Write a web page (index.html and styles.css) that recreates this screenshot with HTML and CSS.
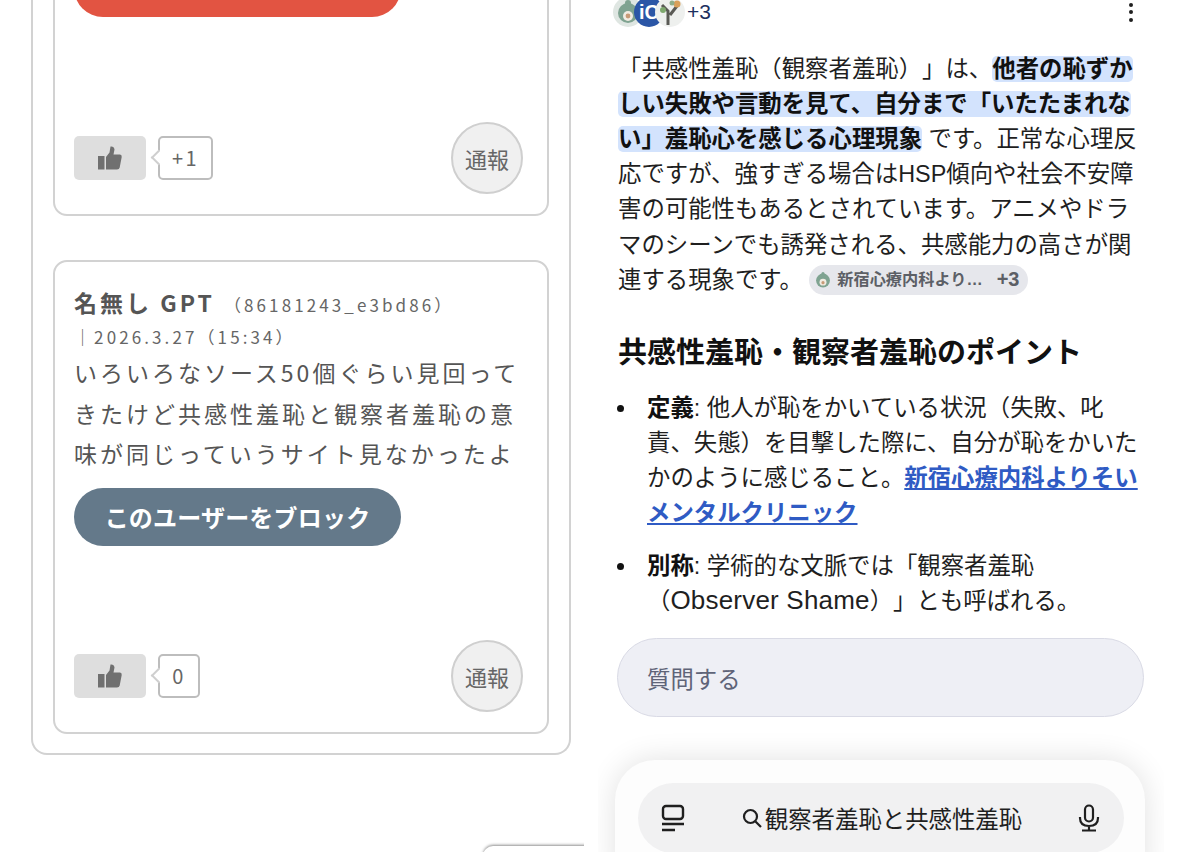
FILE: index.html
```html
<!DOCTYPE html>
<html lang="ja">
  <head>
    <title>共感性羞恥</title>
    <link rel="stylesheet" href="styles.css">
  </head>
  <body>

    <div class="page">

      <section class="thread-col">
        <div class="thread">

          <article class="comment comment-first">
            <div class="pill-btn pill-red"></div>
            <div class="comment-foot foot-first">
              <div class="like">
                <button class="like-btn">
                  <svg class="thumb" viewBox="0 0 24 24"><rect x="0" y="10" width="6.5" height="13.5"/><path d="M8 23.5V11L11.5 6.5L12.5 0.5Q16 0 16.5 3.5L15.5 8.5H22Q24 8.5 23.7 11L21.7 21.5Q21.3 23.5 19 23.5Z"/></svg>
                </button>
                <span class="like-count">+1</span>
              </div>
              <button class="report">通報</button>
            </div>
          </article>

          <article class="comment">
            <header class="comment-head">
              <strong class="comment-name">名無し GPT</strong>
              <span class="comment-id">（86181243_e3bd86）</span>
              <span class="comment-date">｜2026.3.27（15:34）</span>
            </header>
            <p class="comment-body">いろいろなソース50個ぐらい見回ってきたけど共感性羞恥と観察者羞恥の意味が同じっていうサイト見なかったよ</p>
            <button class="pill-btn pill-slate">このユーザーをブロック</button>
            <div class="comment-foot">
              <div class="like">
                <button class="like-btn">
                  <svg class="thumb" viewBox="0 0 24 24"><rect x="0" y="10" width="6.5" height="13.5"/><path d="M8 23.5V11L11.5 6.5L12.5 0.5Q16 0 16.5 3.5L15.5 8.5H22Q24 8.5 23.7 11L21.7 21.5Q21.3 23.5 19 23.5Z"/></svg>
                </button>
                <span class="like-count">0</span>
              </div>
              <button class="report">通報</button>
            </div>
          </article>

        </div>
        <div class="peek"></div>
      </section>

      <section class="answer-col">
        <div class="sources">
          <svg class="avatar" viewBox="0 0 30 30"><circle cx="15" cy="15" r="15" fill="#dfe6e2"/><circle cx="15" cy="16" r="10" fill="#7fa391"/><circle cx="15" cy="19" r="5" fill="#f1ece2"/><circle cx="15" cy="19" r="2.4" fill="#c79a76"/><circle cx="15" cy="6" r="3" fill="#7fa391"/></svg>
          <svg class="avatar" viewBox="0 0 30 30"><circle cx="15" cy="15" r="15" fill="#2b56a6"/><text x="15" y="22" text-anchor="middle" class="avatar-text">iC</text></svg>
          <svg class="avatar" viewBox="0 0 30 30"><circle cx="15" cy="15" r="15" fill="#eef0ee"/><path d="M13 28V14L7 8M15 18L22 9" stroke="#5a5a55" stroke-width="3" fill="none"/><circle cx="22" cy="7" r="3.5" fill="#d9a05b"/><circle cx="8" cy="13" r="3" fill="#7ea86e"/><circle cx="17" cy="6" r="2.5" fill="#8fae8a"/></svg>
          <span class="sources-more">+3</span>
          <span class="kebab"><i></i><i></i><i></i></span>
        </div>

        <p class="answer-text">「共感性羞恥（観察者羞恥）」は、<mark class="hl">他者の恥ずかしい失敗や言動を見て、自分まで「いたたまれない」羞恥心を感じる心理現象</mark> です。正常な心理反応ですが、強すぎる場合はHSP傾向や社会不安障害の可能性もあるとされています。アニメやドラマのシーンでも誘発される、共感能力の高さが関連する現象です。 <span class="chip"><svg class="chip-icon" viewBox="0 0 30 30"><circle cx="15" cy="16" r="13" fill="#7fa391"/><circle cx="15" cy="3" r="3" fill="#7fa391"/><circle cx="15" cy="19" r="6.5" fill="#f1ece2"/><circle cx="15" cy="20" r="3" fill="#c79a76"/></svg><span class="chip-name">新宿心療内科より…</span><span class="chip-more">+3</span></span></p>

        <h2 class="answer-title">共感性羞恥・観察者羞恥のポイント</h2>

        <ul class="answer-list">
          <li><b>定義</b>: 他人が恥をかいている状況（失敗、叱責、失態）を目撃した際に、自分が恥をかいたかのように感じること。<a class="src-link" href="#">新宿心療内科よりそいメンタルクリニック</a></li>
          <li><b>別称</b>: 学術的な文脈では「観察者羞恥（<span class="latin">Observer Shame</span>）」とも呼ばれる。</li>
        </ul>

        <div class="ask">質問する</div>

        <div class="bar-clip">
          <div class="bar">
            <div class="bar-inner">
              <svg class="bar-icon" viewBox="0 0 24 28" fill="none" stroke="#1f1f1f" stroke-width="2.4"><rect x="2" y="2" width="20" height="13" rx="3"/><path d="M1 20H23M1 26H14"/></svg>
              <div class="bar-query">
                <svg class="search-icon" viewBox="0 0 20 20" fill="none" stroke="#1f1f1f" stroke-width="2.2"><circle cx="8.5" cy="8.5" r="6.5"/><path d="M13.5 13.5L19 19"/></svg>
                <span>観察者羞恥と共感性羞恥</span>
              </div>
              <svg class="bar-icon mic" viewBox="0 0 22 28" fill="none" stroke="#1f1f1f" stroke-width="2.2"><rect x="7" y="1.5" width="8" height="16" rx="4"/><path d="M2 13V14Q2 22 11 22Q20 22 20 14V13M11 22V26M4 26.5H18"/></svg>
            </div>
          </div>
        </div>
      </section>

    </div>

  </body>
</html>
```

FILE: styles.css
```css
*,
*:before,
*:after {
  box-sizing: border-box;
}

html,
body {
  height: 100%;
}

body {
  margin: 0px;
  background: #fff;
  color: #1f1f1f;
  text-spacing-trim: space-all;
}

button {
  font-family: inherit;
  padding: 0px;
}

.page {
  display: flex;
  height: 852px;
  overflow: hidden;
}

/* Left column: comment thread */

.thread-col {
  position: relative;
  flex: 0 0 584px;
  overflow: hidden;
  padding-left: 31px;
  color: #555;
  font-family: 'Noto Sans CJK JP', sans-serif;
}

.thread {
  width: 540px;
  margin-top: -57px;
  padding: 0px 20px 19px;
  border: 2px solid #d2d2d2;
  border-top: 0px;
  border-radius: 0px 0px 16px 16px;
}

.comment {
  padding: 24px 24px 20px 19px;
  border: 2px solid #d2d2d2;
  border-radius: 14px;
}

.comment + .comment {
  margin-top: 44px;
}

.comment-first {
  padding-top: 16px;
  border-top: 0px;
  border-radius: 0px 0px 14px 14px;
}

.comment-head {
  color: #666;
  font-size: 17px;
  letter-spacing: 3.1px;
  line-height: 32px;
}

.comment-name {
  margin-right: 2px;
  color: #555;
  font-size: 23px;
  letter-spacing: 3px;
}

.comment-date {
  display: block;
}

.comment-body {
  margin: -1px 0px 0px;
  font-size: 23px;
  letter-spacing: 3px;
  line-height: 40.5px;
}

.pill-btn {
  display: block;
  width: 327px;
  height: 58px;
  border: 0px;
  border-radius: 29px;
}

.pill-red {
  background: #e25442;
}

.pill-slate {
  margin-top: 14px;
  background: #64798a;
  color: #fff;
  font-size: 24px;
  font-weight: 700;
  letter-spacing: 0.2px;
}

.comment-foot {
  display: flex;
  align-items: center;
  justify-content: space-between;
  margin-top: 94px;
}

.foot-first {
  margin-top: 105px;
}

.like {
  display: flex;
  align-items: center;
  gap: 12px;
}

.like-btn {
  display: flex;
  align-items: center;
  justify-content: center;
  width: 72px;
  height: 44px;
  background: #dedede;
  border: 0px;
  border-radius: 5px;
}

.thumb {
  width: 24px;
  height: 24px;
  fill: #707070;
}

.like-count {
  position: relative;
  height: 44px;
  min-width: 42px;
  padding: 0px 12px;
  border: 2px solid #bdbdbd;
  border-radius: 5px;
  color: #666;
  font-size: 20px;
  letter-spacing: 2.5px;
  line-height: 40px;
  text-align: center;
}

.like-count:before {
  content: '';
  position: absolute;
  top: 14px;
  left: -7px;
  width: 11px;
  height: 11px;
  background: #fff;
  border-left: 2px solid #cfcfcf;
  border-bottom: 2px solid #cfcfcf;
  transform: rotate(45deg);
}

.report {
  width: 72px;
  height: 72px;
  background: #f0f0f0;
  border: 2px solid #cfcfcf;
  border-radius: 50%;
  color: #666;
  font-size: 22px;
}

.peek {
  position: absolute;
  top: 846px;
  left: 483px;
  width: 140px;
  height: 40px;
  background: #fff;
  border-radius: 10px;
  box-shadow: 0px -1px 3px rgba(0, 0, 0, 0.45);
}

/* Right column: AI answer */

.answer-col {
  flex: 1;
  min-width: 0px;
  padding-left: 34px;
  font-family: 'Liberation Sans', 'Noto Sans CJK JP', sans-serif;
  font-size: 23.4px;
}

.sources {
  display: flex;
  align-items: center;
  height: 30px;
  margin: -3px 0px 0px -5px;
  width: 520px;
}

.avatar {
  width: 30px;
  height: 30px;
  margin-right: -9px;
}

.avatar-text {
  fill: #fff;
  font-family: 'Liberation Sans', sans-serif;
  font-size: 20px;
  font-weight: 700;
}

.sources-more {
  margin-left: 11px;
  color: #1c2f5e;
  font-size: 21px;
}

.kebab {
  display: flex;
  flex-direction: column;
  gap: 3.5px;
  margin-left: auto;
}

.kebab i {
  display: block;
  width: 4px;
  height: 4px;
  background: #1f1f1f;
  border-radius: 50%;
}

.answer-text {
  width: 520px;
  margin: 24.5px 0px 0px;
  line-height: 35.2px;
}

.hl {
  padding: 0px 0px;
  background: #d3e3fd;
  border-radius: 5px;
  color: #111;
  font-weight: 700;
  -webkit-box-decoration-break: clone;
  box-decoration-break: clone;
}

.chip {
  display: inline-flex;
  align-items: center;
  height: 30px;
  padding: 0px 9px 0px 6px;
  background: #e6e7ec;
  border-radius: 15px;
  color: #5c5f66;
  font-size: 16.2px;
  font-weight: 700;
  vertical-align: 0px;
}

.chip-icon {
  width: 16px;
  height: 16px;
  margin-right: 6px;
}

.chip-more {
  margin-left: 14px;
  font-size: 20px;
}

.answer-title {
  margin: 37.5px 0px 0px;
  color: #111;
  font-size: 29px;
  font-weight: 700;
  line-height: 36px;
}

.answer-list {
  width: 520px;
  margin: 20px 0px 0px;
  padding-left: 29px;
  line-height: 35px;
  list-style: none;
}

.answer-list li {
  position: relative;
  margin-bottom: 18px;
}

.answer-list li:before {
  content: '';
  position: absolute;
  top: 14px;
  left: -30px;
  width: 7px;
  height: 7px;
  background: #111;
  border-radius: 50%;
}

.answer-list b {
  color: #111;
}

.latin {
  font-size: 26px;
  letter-spacing: 0.2px;
  line-height: 1;
}

.src-link {
  color: #2f5bc4;
  font-weight: 700;
}

.ask {
  display: flex;
  align-items: center;
  width: 527px;
  height: 79px;
  margin: 19px 0px 0px -1px;
  padding-left: 29px;
  background: #eeeff5;
  border: 1.5px solid #d9dae5;
  border-radius: 40px;
  color: #5f6478;
}

.bar-clip {
  width: 566px;
  height: 160px;
  margin: 0px 0px 0px -20px;
  padding: 43px 19px 0px 17px;
  overflow: hidden;
}

.bar {
  height: 140px;
  padding: 23px 21px 0px 23px;
  background: #fdfdfd;
  border-radius: 40px;
  box-shadow: 0px 0px 30px rgba(0, 0, 0, 0.12);
}

.bar-inner {
  display: flex;
  align-items: center;
  height: 70px;
  padding: 0px 23px;
  background: #f1f1f2;
  border-radius: 35px;
}

.bar-icon {
  flex: none;
  width: 24px;
  height: 28px;
}

.bar-query {
  display: flex;
  flex: 1;
  align-items: center;
  justify-content: center;
  gap: 3px;
  margin-left: 2px;
  color: #1f1f1f;
}

.search-icon {
  width: 20px;
  height: 20px;
}
```
